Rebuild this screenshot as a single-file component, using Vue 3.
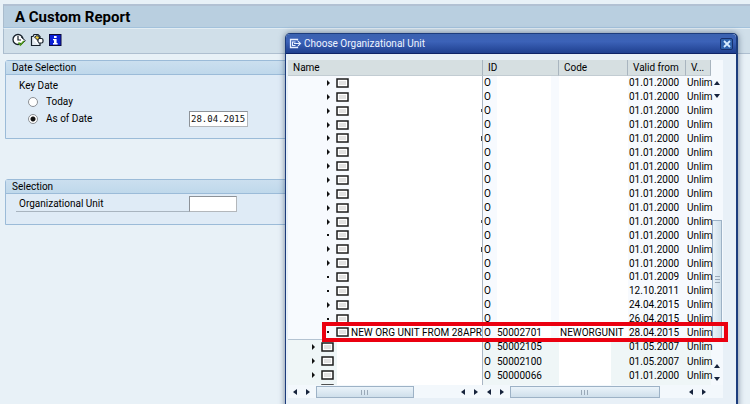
<script setup>
import { ref } from 'vue'

const mode = ref('asof')
const keyDate = ref('28.04.2015')
const orgUnit = ref('')

const older = (leaf, from, hint = '') => ({ leaf, from, hint, id: '', name: '', code: '', level: 2 })

const rows = [
  older(false, '01.01.2000'),
  older(false, '01.01.2000'),
  older(false, '01.01.2000', 'dot'),
  older(false, '01.01.2000'),
  older(false, '01.01.2000', 'bar'),
  older(false, '01.01.2000'),
  older(false, '01.01.2000'),
  older(false, '01.01.2000'),
  older(false, '01.01.2000'),
  older(false, '01.01.2000'),
  older(false, '01.01.2000', 'dot'),
  older(true, '01.01.2000'),
  older(false, '01.01.2000', 'bar'),
  older(false, '01.01.2000'),
  older(true, '01.01.2009'),
  older(true, '12.10.2011'),
  older(false, '24.04.2015'),
  older(true, '26.04.2015'),
  { leaf: true, from: '28.04.2015', id: '50002701', name: 'NEW ORG UNIT FROM 28APRI', code: 'NEWORGUNIT', level: 2, marked: true },
  { leaf: false, from: '01.05.2007', id: '50002105', name: '', code: '', level: 1 },
  { leaf: false, from: '01.05.2007', id: '50002100', name: '', code: '', level: 1 },
  { leaf: false, from: '01.01.2000', id: '50000066', name: '', code: '', level: 1 },
  { leaf: true, from: '', id: '', name: '', code: '', level: 1, last: true }
]
</script>

<template>
  <main class="page">
    <header class="title"><h1>A Custom Report</h1></header>
    <nav class="toolbar">
      <button type="button" aria-label="Execute">
        <svg width="14" height="14" viewBox="0 0 14 14">
          <circle cx="6" cy="6.5" r="5" fill="#fff" stroke="#16202a" stroke-width="1.3" />
          <path d="M6 3v4h3" fill="none" stroke="#16202a" stroke-width="1.2" />
          <path d="M9.2 4.2 13.3 7.6 9 12" fill="#fff" stroke="#16202a" stroke-width="1" />
          <path d="M6.5 9.5 8.4 12 12 8" fill="none" stroke="#4f9a1c" stroke-width="1.7" />
        </svg>
      </button>
      <button type="button" aria-label="Get variant">
        <svg width="14" height="14" viewBox="0 0 14 14">
          <path d="M1.5 3.5h1.5l1-2h4l2 2v9h-8.500z" fill="#e3ebf1" stroke="#16202a" stroke-width="1.2" />
          <path d="M4.500 4 7 2.500 10 5 8 7.500z" fill="#f3d23c" stroke="#16202a" stroke-width="1" />
          <rect x="8" y="5.500" width="5" height="4.500" rx="1.500" fill="#fff" stroke="#16202a" stroke-width="1.200" />
          <path d="M4 6.500l4 4" stroke="#fff" stroke-width="1.500" />
        </svg>
      </button>
      <button type="button" aria-label="Information">
        <svg width="14" height="14" viewBox="0 0 14 14">
          <rect x="1.5" y="1.5" width="11.5" height="11" fill="#0a1fd6" stroke="#0a0a3c" />
          <path d="M6 3h2.600v2H6zM5 6h3.600v4h1v1.500H5V10h1V7.200H5z" fill="#fff" />
        </svg>
      </button>
    </nav>

    <div class="content">
      <fieldset class="panel dates">
        <h2>Date Selection</h2>
        <div class="fields">
          <p>Key Date</p>
          <label class="option"><input v-model="mode" type="radio" name="mode" value="today" />Today</label>
          <div class="option">
            <label class="option-label"><input v-model="mode" type="radio" name="mode" value="asof" />As of Date</label>
            <input v-model="keyDate" class="text date" aria-label="As of Date value" />
          </div>
        </div>
      </fieldset>

      <fieldset class="panel selection">
        <h2>Selection</h2>
        <div class="unit">
          <label for="unit">Organizational Unit</label>
          <input id="unit" v-model="orgUnit" class="text" />
        </div>
      </fieldset>
    </div>

    <section class="dialog" role="dialog" aria-labelledby="dialog-title">
      <header class="dialog-title">
        <svg width="14" height="11" viewBox="0 0 14 11" fill="none" stroke="#e8f0ff">
          <path d="M9.500 2.500v-1h-7v8h7v-1" stroke-width="1.3" />
          <path d="M7.500 4h-3v3.500h3M6 5.500h6M10 3.200l2.500 2.300L10 7.800" stroke-width="1.1" />
        </svg>
        <h2 id="dialog-title">Choose Organizational Unit</h2>
        <button type="button" class="close" aria-label="Close">
          <svg width="8" height="8" viewBox="0 0 8 8"><path d="M1 1l6 6M7 1L1 7" stroke="#d6ecff" stroke-width="1.8" /></svg>
        </button>
      </header>

      <div class="view">
        <table>
          <colgroup>
            <col class="c-name" /><col class="c-id" /><col class="c-code" /><col class="c-from" /><col class="c-to" />
          </colgroup>
          <thead>
            <tr><th>Name</th><th>ID</th><th>Code</th><th>Valid from</th><th>V...</th></tr>
          </thead>
          <tbody>
            <tr v-for="(r, i) in rows" :key="i" :class="['level-' + r.level, { marked: r.marked }]">
              <td class="name">
                <div class="node">
                  <svg class="twist" width="5" height="8" viewBox="0 0 5 8">
                    <rect v-if="r.leaf && !r.last" x="1" y="3" width="2" height="2" fill="#111" />
                    <path v-else-if="!r.last" d="M1 1l3 3-3 3z" fill="#111" />
                  </svg>
                  <svg class="box" width="13" height="10" viewBox="0 0 13 10">
                    <rect x="1" y="1" width="11" height="8" fill="#fff" stroke="#1c1c1c" stroke-width="1.5" />
                    <rect x="3" y="3" width="7" height="4" fill="#e2e2e2" />
                  </svg>
                  <span class="fill">{{ r.name }}</span>
                  <i v-if="r.hint" :class="['hint', r.hint]"></i>
                </div>
                <div v-if="r.marked" class="marker"></div>
              </td>
              <td class="id"><div><span class="type">{{ r.last ? '' : 'O' }}</span><span class="num">{{ r.id }}</span></div></td>
              <td class="code"><div>{{ r.code }}</div></td>
              <td class="from">{{ r.from }}</td>
              <td class="to">{{ r.last ? '' : 'Unlim' }}</td>
            </tr>
          </tbody>
        </table>
        <div class="vscroll">
          <button type="button" aria-label="Scroll up"><i class="up"></i></button>
          <button type="button" aria-label="Scroll down"><i class="down"></i></button>
          <div class="track"><div class="thumb"><i></i></div></div>
          <button type="button" aria-label="Page up"><i class="up"></i></button>
          <button type="button" aria-label="Page down"><i class="down"></i></button>
        </div>
      </div>

      <div class="hscrolls">
        <div v-for="side in ['tree', 'list']" :key="side" :class="['hscroll', side]">
          <button type="button" aria-label="Scroll left"><i class="left"></i></button>
          <button type="button" aria-label="Scroll right"><i class="right"></i></button>
          <div class="track"><div class="thumb"><i></i></div></div>
          <button type="button" aria-label="Scroll left"><i class="left"></i></button>
          <button type="button" aria-label="Scroll right"><i class="right"></i></button>
        </div>
      </div>
    </section>
  </main>
</template>

<style>
body { background: #e8f1f7; }
</style>

<style scoped>
* { box-sizing: border-box; margin: 0; padding: 0; }
.page {
  position: relative;
  min-height: 100vh;
  overflow: hidden;
  padding: 4px 0 0 3px;
  background: #e8f1f7;
  color: #000;
  font: 10px/14px Roboto, "Noto Sans", sans-serif;
}
button { border: 0; background: none; display: flex; align-items: center; justify-content: center; font: inherit; }
svg { display: block; flex: none; }
.title {
  height: 24px;
  padding-left: 11px;
  border-top: 2px solid #b2c1d3;
  border-bottom: 1px solid #a3c2dc;
  border-left: 1px solid #a9bccd;
  background: #b9cfe0;
}
h1 { font: bold 15px/23px Roboto, sans-serif; color: #000; }
.toolbar {
  display: flex;
  gap: 4px;
  height: 26px;
  padding: 0 8px;
  border-left: 1px solid #a9bccd;
  border-top: 1px solid #e3edf3;
  border-bottom: 1px solid #aebfd0;
  background: #d0dfe9;
}
.toolbar button { height: 22px; }
.content { padding: 6px 20px 0 2px; }
.panel {
  border: 1px solid #9bbbd8;
  border-radius: 3px 3px 0 0;
  background: #dfebf6;
}
.panel h2 {
  height: 14px;
  padding-left: 6px;
  border-bottom: 1px solid #9bbbd8;
  background: linear-gradient(#cbdfef, #bfd8eb);
  font: inherit;
  line-height: 13px;
}
.dates { min-height: 79px; }
.selection { margin-top: 40px; min-height: 46px; }
.fields { padding: 4px 0 0 13px; }
.option { display: flex; align-items: center; height: 17px; padding-left: 9px; }
.option-label { display: flex; align-items: center; width: 161px; }
input[type="radio"] {
  appearance: none;
  width: 10px;
  height: 10px;
  margin-right: 8px;
  border: 1px solid #8b8f94;
  border-radius: 50%;
  background: #fff;
}
input[type="radio"]:checked { background: radial-gradient(circle, #111 2px, #fff 3px); }
.text {
  width: 48px;
  height: 16px;
  border: 1px solid #8d9298;
  border-bottom-color: #b3b7bb;
  border-right-color: #b3b7bb;
  background: #fff;
}
.date { width: 59px; padding-left: 1px; font: 9px "DejaVu Sans Mono", monospace; color: #111; }
.unit { display: flex; padding: 2px 0 0 10px; }
.unit label { width: 173px; padding: 1px 0 0 3px; border-bottom: 1px solid #a8b4bf; }

.dialog {
  position: absolute;
  top: 33px;
  right: 12px;
  bottom: -8px;
  left: 285px;
  display: flex;
  flex-direction: column;
  border: 1px solid #1c3c7c;
  border-right-width: 2px;
  border-radius: 5px 5px 0 0;
  background: #e8f0f7;
  box-shadow: 0 0 6px rgba(40, 60, 90, 0.6);
}
.dialog-title {
  display: flex;
  align-items: center;
  gap: 2px;
  height: 20px;
  flex: none;
  padding: 0 3px 0 2px;
  border-bottom: 1px solid #0e2468;
  border-radius: 4px 4px 0 0;
  background: linear-gradient(#3a62b0, #3c62b8 40%, #1f4090);
  color: #eef4ff;
}
.dialog-title h2 { flex: 1; font: inherit; }
.close { width: 13px; height: 12px; border: 1px solid #17306c; border-radius: 2px; background: #2f62ac; }
.view {
  display: flex;
  flex: none;
  height: 325px;
  margin: 6px 8px 0 2px;
  overflow: hidden;
}
table {
  flex: 1;
  width: 0;
  height: 336px;
  border-collapse: separate;
  border-spacing: 0;
  table-layout: fixed;
}
.c-id { width: 76px; }
.c-code { width: 69px; }
.c-from { width: 58px; }
.c-to { width: 25px; }
th {
  height: 16px;
  padding-left: 5px;
  border-right: 1px solid #a9b5bf;
  border-bottom: 1px solid #c2ccd2;
  background: #d6dfe1;
  font-weight: normal;
  line-height: 14px;
  text-align: left;
  white-space: nowrap;
}
tbody tr { position: relative; background: #f7fafe; }
tbody .level-1 { background: #eff6f7; }
td { line-height: 13px; vertical-align: middle; white-space: nowrap; }
.name { border-right: 1px solid #a9b5c4; }
.node { display: flex; align-items: center; overflow: hidden; padding-left: 38px; }
.level-1 .node { padding-left: 23px; }
.box { margin-left: 5px; }
.fill { flex: 1; min-width: 0; min-height: 13px; margin-left: 2px; overflow: hidden; }
.hint { width: 1px; height: 5px; background: #444; }
.hint.dot { height: 3px; background: #555; }
.id > div { display: flex; padding-left: 1px; }
.type { width: 13px; }
.num { width: 54px; min-height: 13px; }
.level-2 .id { background: linear-gradient(to right, transparent 14px, #fff 14px 68px, transparent 68px); }
.level-2 .code { background: #fff; }
.level-2 .name { background: linear-gradient(to right, transparent 62px, #fff 62px); }
.level-1 .name { background: linear-gradient(to right, transparent 49px, #fff 49px); }
.level-1 .code { background: linear-gradient(to right, #fff 52px, transparent 52px); }
.code div, .from, .to { padding-left: 1px; }
.marked + tr td.name { border-top: 1px solid #b4c3d2; }
.marker {
  position: absolute;
  z-index: 1;
  top: -3px;
  right: -17px;
  bottom: -3px;
  left: 34px;
  border: 4px solid #eb0010;
}

.vscroll { display: flex; flex-direction: column; width: 17px; padding: 16px 5px 0 0; background: linear-gradient(to right, #f5f9fd 12px, transparent 12px); }
.vscroll button { height: 13px; }
.vscroll .track { display: flex; flex-direction: column; flex: 1; justify-content: flex-end; padding: 0 1px 20px; }
.vscroll .thumb { height: 119px; background: linear-gradient(to right, #e9f2f9, #cfdfea); }
.thumb { display: flex; align-items: center; justify-content: center; border: 1px solid #9db2c6; }
.thumb i { width: 5px; height: 7px; background: repeating-linear-gradient(#9aa9b8 0 1px, transparent 1px 3px); }
.up, .down { border: 3px solid transparent; }
.up { border-top: 0; border-bottom: 4px solid #16233c; }
.down { border-bottom: 0; border-top: 4px solid #16233c; }
.left, .right { border: 3px solid transparent; }
.left { border-left: 0; border-right: 4px solid #16233c; }
.right { border-right: 0; border-left: 4px solid #16233c; }
.hscrolls { display: flex; margin: 0 13px 0 2px; padding-right: 13px; background: #f3f8fc; }
.hscroll { display: flex; height: 13px; }
.tree { flex: 194; }
.list { flex: 228; }
.hscroll button { width: 13px; }
.hscroll .track { display: flex; flex: 1; padding: 1px 0 0 2px; }
.hscroll .thumb { width: 70%; background: linear-gradient(#eaf3fa, #cfdfeb); }
.list .thumb { width: 86%; }
.hscroll .thumb i { width: 8px; height: 5px; background: repeating-linear-gradient(to right, #9aa9b8 0 1px, transparent 1px 3px); }
</style>
